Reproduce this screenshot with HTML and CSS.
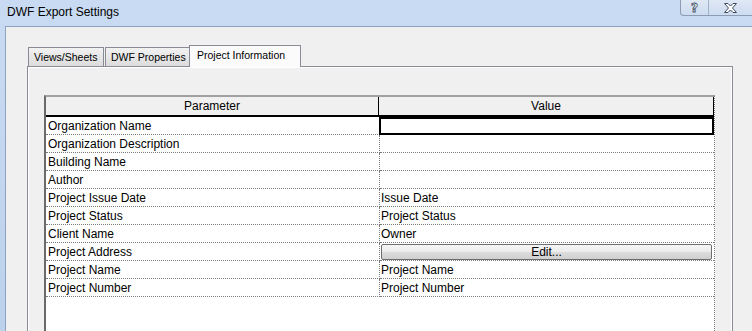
FILE: index.html
```html
<!DOCTYPE html>
<html lang="en">

  <head>
    <meta charset="UTF-8">
    <title>DWF Export Settings</title>
    <link rel="stylesheet" href="styles.css">
  </head>

  <body>

    <div class="window">
      <div class="titlebar">
        <span class="title">DWF Export Settings</span>
        <div class="caption-btns">
          <div class="cap-btn help-btn"><span class="help-glyph">?</span></div>
          <div class="cap-btn close-btn">
            <svg width="13" height="10" viewBox="0 0 13 10">
              <path d="M0.5 0.5 H4 L6.5 3 L9 0.5 H12.5 L8.5 5 L12.5 9.5 H9 L6.5 7 L4 9.5 H0.5 L4.5 5 Z" fill="#fff" stroke="#3c4a5e" stroke-width="1"/>
            </svg>
          </div>
        </div>
      </div>

      <div class="frame">
        <div class="client">
          <div class="tabs">
            <div class="tab tab-views">Views/Sheets</div>
            <div class="tab tab-props">DWF Properties</div>
            <div class="tab tab-active">Project Information</div>
          </div>

          <div class="panel">
            <div class="grid">
              <div class="grid-head">
                <div class="head-cell head-param">Parameter</div>
                <div class="head-cell head-value">Value</div>
              </div>

              <div class="row">
                <div class="cell param">Organization Name</div>
                <div class="cell value current"></div>
              </div>
              <div class="row">
                <div class="cell param">Organization Description</div>
                <div class="cell value"></div>
              </div>
              <div class="row">
                <div class="cell param">Building Name</div>
                <div class="cell value"></div>
              </div>
              <div class="row">
                <div class="cell param">Author</div>
                <div class="cell value"></div>
              </div>
              <div class="row">
                <div class="cell param">Project Issue Date</div>
                <div class="cell value">Issue Date</div>
              </div>
              <div class="row">
                <div class="cell param">Project Status</div>
                <div class="cell value">Project Status</div>
              </div>
              <div class="row">
                <div class="cell param">Client Name</div>
                <div class="cell value">Owner</div>
              </div>
              <div class="row">
                <div class="cell param">Project Address</div>
                <div class="cell value"><button class="edit-btn">Edit...</button></div>
              </div>
              <div class="row">
                <div class="cell param">Project Name</div>
                <div class="cell value">Project Name</div>
              </div>
              <div class="row">
                <div class="cell param">Project Number</div>
                <div class="cell value">Project Number</div>
              </div>
            </div>
          </div>
        </div>
      </div>
    </div>

  </body>

</html>
```

FILE: styles.css
```css
body {
  margin: 0;
  padding: 0;
  font-family: 'Liberation Sans', Arial, sans-serif;
  background-color: #c3d6ef;
  color: #000;
}

.window {
  width: 752px;
  height: 331px;
  display: flex;
  flex-direction: column;
  overflow: hidden;
  background: linear-gradient(#c9dbf2, #bcd1ec);
}

/* title bar */
.titlebar {
  flex-shrink: 0;
  height: 26px;
  display: flex;
  align-items: flex-start;
}

.title {
  padding: 5px 0 0 7px;
  font-size: 12px;
  line-height: 14px;
  color: #000;
}

.caption-btns {
  margin-left: auto;
  display: flex;
  height: 15px;
  border: 1px solid #8d9cb3;
  border-top: none;
  border-right: none;
  border-bottom-left-radius: 4px;
  background: linear-gradient(#dfe8f5, #cddcf0);
}

.cap-btn {
  display: flex;
  align-items: center;
  justify-content: center;
}

.help-btn {
  width: 27px;
  border-right: 1px solid #9fb0c8;
}

.help-glyph {
  font-family: 'DejaVu Sans', sans-serif;
  font-weight: bold;
  font-size: 12px;
  line-height: 12px;
  color: #fff;
  -webkit-text-stroke: 0.8px #3c4a5e;
}

.close-btn {
  width: 43px;
}

/* window body */
.frame {
  flex: 1;
  min-height: 0;
  overflow: hidden;
  display: flex;
  padding-left: 5px;
}

.client {
  flex: 1;
  background-color: #f0f0f0;
  border-top: 1px solid #8ea3bf;
  border-left: 1px solid #8ea3bf;
  padding: 18px 19px 0 21px;
}

/* tabs */
.tabs {
  display: flex;
  align-items: flex-end;
  height: 21px;
  padding-left: 1px;
  font-size: 10.5px;
}

.tab {
  height: 18px;
  line-height: 19px;
  padding: 0 5px;
  border: 1px solid #898c95;
  border-bottom: none;
  background: linear-gradient(#f2f2f2, #dcdcdc);
  color: #000;
  white-space: nowrap;
}

.tab-views {
  width: 64px;
}

.tab-props {
  width: 73px;
  margin-left: 1px;
}

.tab-active {
  position: relative;
  width: 98px;
  height: 21px;
  line-height: 19px;
  margin-left: -1px;
  margin-bottom: -1px;
  padding: 0 5px 0 7px;
  background: #fbfbfb;
}

.panel {
  border: 1px solid #898c95;
  box-shadow: inset 1px 1px 0 #fff, inset -1px 0 0 #fff;
  background-color: #f0f0f0;
  padding: 28px 17px 0 16px;
  height: 300px;
}

/* property grid */
.grid {
  height: 260px;
  background-color: #fff;
  border-top: 2px solid #a0a0a0;
  border-left: 2px solid #6a6a6a;
  border-right: 1px dotted #7a7a7a;
  font-size: 12px;
}

.grid-head {
  display: grid;
  grid-template-columns: 333px 1fr;
  background-color: #f0f0f0;
  border-bottom: 2px solid #000;
}

.head-cell {
  height: 18px;
  line-height: 19px;
  text-align: center;
}

.head-param {
  border-right: 1px solid #000;
}

.head-value {
  border-right: 1px solid #000;
}

.row {
  display: grid;
  grid-template-columns: 334px 1fr;
}

.cell {
  height: 17px;
  line-height: 18px;
  border-bottom: 1px dotted #7a7a7a;
  white-space: nowrap;
}

.param {
  padding-left: 2px;
  border-right: 1px dotted #7a7a7a;
}

.value {
  padding-left: 1px;
}

.current {
  margin-left: -1px;
  outline: 2px solid #000;
  outline-offset: -2px;
}

.edit-btn {
  display: block;
  width: 331px;
  height: 16px;
  margin: 1px 0 0 0;
  padding: 0;
  border: 1px solid #6f6f6f;
  border-radius: 2px;
  background: linear-gradient(#f6f6f6 0%, #ebebeb 50%, #dddddd 51%, #cfcfcf 100%);
  font-family: 'Liberation Sans', Arial, sans-serif;
  font-size: 12px;
  line-height: 14px;
  color: #000;
}
```
